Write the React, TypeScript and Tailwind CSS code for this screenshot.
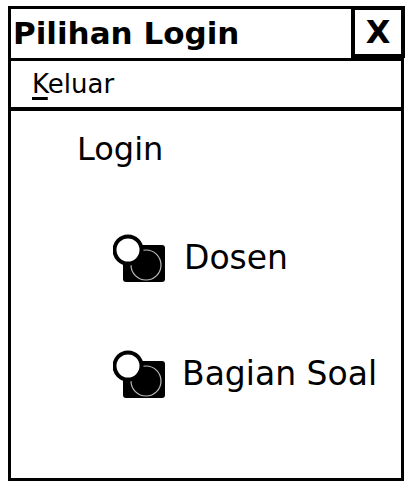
import React from "react";

// Radio-ish option glyph: hollow ring over a black rounded square
function OptionIcon() {
  return (
    <svg width="54" height="50" viewBox="0 0 54 50" className="shrink-0">
      <rect x="10" y="12" width="42" height="37" rx="3" fill="#000" />
      <circle cx="33" cy="32" r="15" fill="none" stroke="#bbb" strokeWidth="1.2" />
      <circle cx="15" cy="17" r="13.5" fill="#fff" stroke="#000" strokeWidth="4" />
    </svg>
  );
}

export default function App() {
  return (
    <div className="w-[411px] h-[486px] bg-white pt-[6px] pl-[8px] font-['DejaVu_Sans',sans-serif] text-black">
      <div className="w-[396px] h-[475px] border-[3px] border-black flex flex-col">
        {/* title bar */}
        <div className="h-[52px] flex items-stretch border-b-[3px] border-black">
          <div className="flex-1 flex items-center pl-[2px] text-[31px] font-bold leading-none">
            Pilihan Login
          </div>
          <div className="w-[54px] -mt-[3px] -mr-[4px] h-[52px] border-[4px] border-black flex items-center justify-center text-[32px] font-bold leading-none">
            X
          </div>
        </div>

        {/* menu bar */}
        <div className="h-[50px] flex items-center pl-[21px] text-[26px] border-b-[4px] border-black">
          <span>
            <span className="underline decoration-[3px] underline-offset-[4px]">K</span>eluar
          </span>
        </div>

        {/* content */}
        <div className="flex-1 flex flex-col">
          <div className="pl-[66px] pt-[22px] text-[32px] leading-none">Login</div>
          <div className="flex items-center pl-[102px] mt-[68px] gap-[17px] text-[33px]">
            <OptionIcon />
            <span>Dosen</span>
          </div>
          <div className="flex items-center pl-[102px] mt-[66px] gap-[15px] text-[33px]">
            <OptionIcon />
            <span>Bagian Soal</span>
          </div>
        </div>
      </div>
    </div>
  );
}
